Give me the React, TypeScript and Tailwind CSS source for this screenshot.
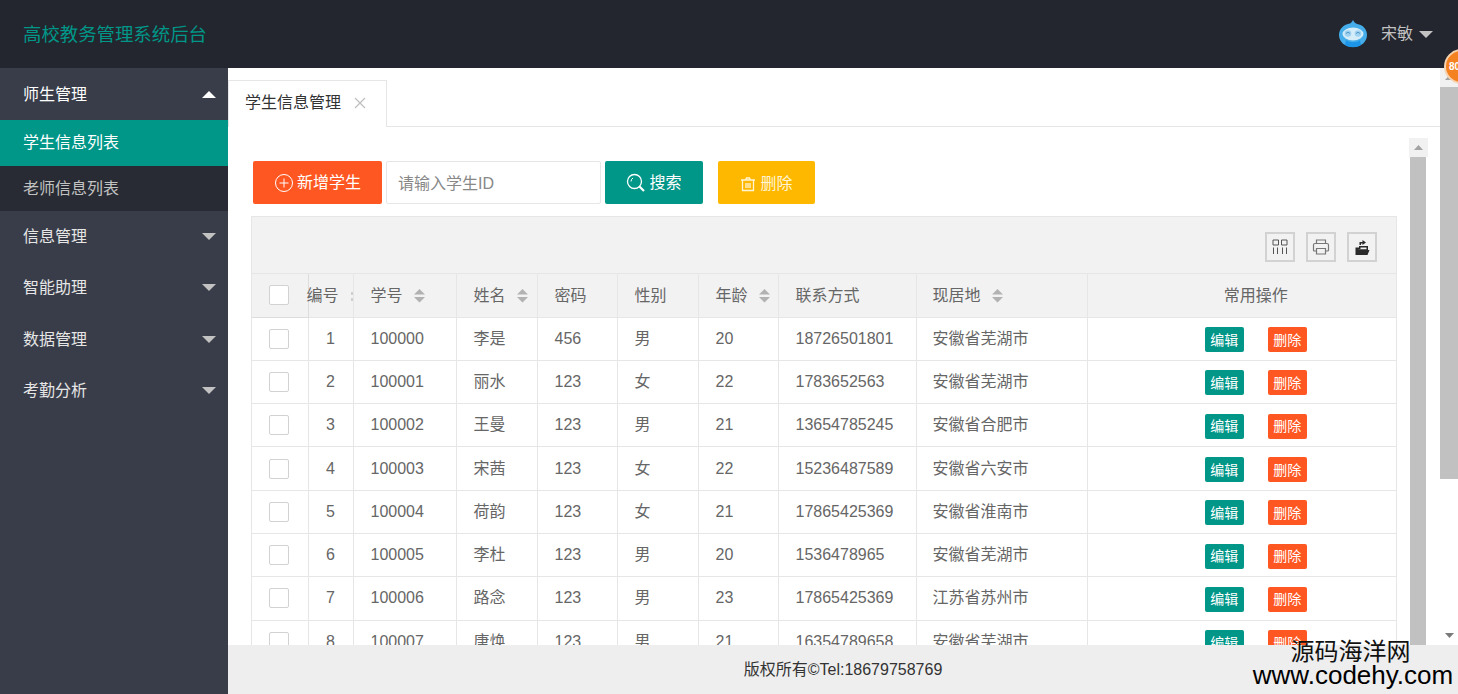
import React from "react";

const rows = [
  ["1", "100000", "李是", "456", "男", "20", "18726501801", "安徽省芜湖市"],
  ["2", "100001", "丽水", "123", "女", "22", "1783652563", "安徽省芜湖市"],
  ["3", "100002", "王曼", "123", "男", "21", "13654785245", "安徽省合肥市"],
  ["4", "100003", "宋茜", "123", "女", "22", "15236487589", "安徽省六安市"],
  ["5", "100004", "荷韵", "123", "女", "21", "17865425369", "安徽省淮南市"],
  ["6", "100005", "李杜", "123", "男", "20", "1536478965", "安徽省芜湖市"],
  ["7", "100006", "路念", "123", "男", "23", "17865425369", "江苏省苏州市"],
  ["8", "100007", "唐焕", "123", "男", "21", "16354789658", "安徽省芜湖市"],
];

function Caret({ up, color = "#c2c2c2" }: { up?: boolean; color?: string }) {
  return (
    <svg width="14" height="7" viewBox="0 0 14 7" className="shrink-0">
      <path d={up ? "M7 0L14 7H0Z" : "M0 0H14L7 7Z"} fill={color} />
    </svg>
  );
}

function Sort() {
  return (
    <svg width="11" height="14" viewBox="0 0 11 14" className="ml-[11px] inline-block align-[-2px]">
      <path d="M5.500 0L11 5.500H0Z M0 8H11L5.500 13.500Z" fill="#b2b2b2" />
    </svg>
  );
}

function Check() {
  return <div className="mx-auto h-5 w-5 -translate-x-px rounded-[2px] border border-[#d2d2d2] bg-white" />;
}

function NavGroup({ label, h, up }: { label: string; h: string; up?: boolean }) {
  return (
    <div className={`flex items-center justify-between pl-[23px] pr-[12px] text-base ${h} ${up ? "text-white" : "text-[#e6e6e6]"}`}>
      <span className="mt-[2px]">{label}</span>
      <Caret up={up} color={up ? "#ffffff" : "#c2c2c2"} />
    </div>
  );
}

function ToolIcon({ children }: { children: React.ReactNode }) {
  return (
    <div className="flex h-[30px] w-[30px] items-center justify-center border-2 border-[#d2d2d2]">
      {children}
    </div>
  );
}

function Owl() {
  return (
    <svg width="30" height="28" viewBox="0 0 30 28">
      <path d="M15 0C16 2 17 3 19 4C25 5 29 9 29 15C29 22 23 27 15 27C7 27 1 22 1 15C1 9 6 4 12 3.500C13 3 14 2 15 0Z" fill="#45ade9" />
      <path d="M8 20C11 23 19 23 22 20L23 25C19 28 11 28 7 25Z" fill="#1c95e8" />
      <ellipse cx="15" cy="14" rx="10.500" ry="6.500" fill="#d5ecf9" />
      <circle cx="10" cy="13.500" r="3.300" fill="#9fd2f0" />
      <circle cx="20" cy="13.500" r="3.300" fill="#9fd2f0" />
      <path d="M8 13.500Q10 11 12 13.500M18 13.500Q20 11 22 13.500" stroke="#3f87b8" strokeWidth="0.800" fill="none" />
    </svg>
  );
}

export default function App() {
  return (
    <div className="relative flex h-[694px] w-[1458px] flex-col overflow-hidden bg-white font-[Liberation_Sans,Noto_Sans_CJK_SC,sans-serif]">
      <header className="flex h-[68px] shrink-0 items-center justify-between bg-[#23262e] pl-[23px] pr-[25px]">
        <span className="mt-[2px] text-[18.4px] text-[#009688]">高校教务管理系统后台</span>
        <div className="flex items-center text-base text-[#c2c2c2]">
          <Owl />
          <span className="-mt-[1px] ml-[13px]">宋敏</span>
          <span className="ml-[6px]"><Caret color="#c2c2c2" /></span>
        </div>
      </header>

      <div className="flex min-h-0 flex-1">
        <aside className="w-[228px] shrink-0 bg-[#393d49]">
          <NavGroup label="师生管理" h="h-[52px]" up />
          <div className="flex h-[46px] items-center bg-[#009688] pl-[23px] text-base text-white">学生信息列表</div>
          <div className="flex h-[45px] items-center bg-[#282b33] pl-[23px] text-base text-[#c2c2c2]">老师信息列表</div>
          <NavGroup label="信息管理" h="h-[50px]" />
          <NavGroup label="智能助理" h="h-[52px]" />
          <NavGroup label="数据管理" h="h-[52px]" />
          <NavGroup label="考勤分析" h="h-[50px]" />
        </aside>

        <div className="flex min-w-0 flex-1 flex-col">
          <main className="flex min-h-0 flex-1">
            <div className="flex min-w-0 flex-1 flex-col">
              <div className="mt-3 flex h-[47px] shrink-0 border-b border-[#e6e6e6]">
                <div className="-mb-px flex w-[159px] items-center border border-b-0 border-[#e6e6e6] bg-white pb-[2px] pl-[16px] text-base text-[#333]">
                  学生信息管理
                  <svg width="12" height="12" viewBox="0 0 12 12" className="ml-[13px]">
                    <path d="M1 1L11 11M11 1L1 11" stroke="#bdbdbd" strokeWidth="1.200" />
                  </svg>
                </div>
              </div>

              <div className="ml-[23px] mt-[11px] flex min-h-0 flex-1 gap-[12px]">
                <div className="w-[1146px] shrink-0 overflow-hidden pt-[23px]">
                  <div className="ml-[2px] flex h-[43px] items-stretch">
                    <button className="flex w-[129px] items-center justify-center rounded-[2px] bg-[#ff5722] text-base text-white">
                      <svg width="20" height="20" viewBox="0 0 20 20" className="mr-[3px]" fill="none" stroke="#fff" strokeWidth="1">
                        <circle cx="10" cy="10" r="8.500" />
                        <path d="M10 5.500V14.500M5.500 10H14.500" />
                      </svg>
                      新增学生
                    </button>
                    <div className="ml-[4px] flex w-[215px] items-center rounded-[2px] border border-[#e6e6e6] bg-white pl-[11px] pt-[2px] text-base text-[#888]">
                      请输入学生ID
                    </div>
                    <button className="ml-[4px] flex w-[98px] items-center justify-center rounded-[2px] bg-[#009688] text-base text-white">
                      <svg width="20" height="20" viewBox="0 0 20 20" className="mr-[3px]" fill="none" stroke="#fff">
                        <circle cx="8.500" cy="8.500" r="7" strokeWidth="1.300" />
                        <path d="M13.500 13.500L18 18" strokeWidth="2.200" />
                        <path d="M5 8.500Q5 6 7 5" strokeWidth="1" />
                      </svg>
                      搜索
                    </button>
                    <button className="ml-[15px] flex w-[97px] items-center justify-center rounded-[2px] bg-[#ffb800] pt-[2px] text-base text-[#fff5d6]">
                      <svg width="16" height="16" viewBox="0 0 16 16" className="mr-[4px]" fill="none" stroke="#fff5d6" strokeWidth="1.300">
                        <path d="M1 4H15M5.500 4L6.500 2H9.500L10.500 4M2.500 4V14.500H13.500V4M6 7V12M8 7V12M10 7V12" />
                      </svg>
                      删除
                    </button>
                  </div>

                  <div className="mt-3 border-x border-t border-[#e6e6e6]">
                    <div className="flex h-[57px] items-center justify-end gap-[11px] border-b border-[#e6e6e6] bg-[#f2f2f2] pr-[19px] pt-[4px]">
                      <ToolIcon>
                        <svg width="16" height="16" viewBox="0 0 16 16" fill="none" stroke="#555" strokeWidth="1">
                          <path d="M1 1H6.500V6H1ZM9.500 1H15V6H9.500ZM1.500 8.500V15M5.500 8.500V15M10.500 8.500V15M14.500 8.500V15" />
                        </svg>
                      </ToolIcon>
                      <ToolIcon>
                        <svg width="18" height="18" viewBox="0 0 18 18" fill="none" stroke="#777" strokeWidth="1.200">
                          <path d="M4.500 5V2H13.500V5M4.500 13H2.500Q1.500 13 1.500 12V7Q1.500 5.500 3 5.500H15Q16.500 5.500 16.500 7V12Q16.500 13 15.500 13H13.500M4.500 10.500H13.500V16H4.500Z" />
                        </svg>
                      </ToolIcon>
                      <ToolIcon>
                        <svg width="16" height="18" viewBox="0 0 16 18" fill="#2b2b2b">
                          <path d="M1.500 17V9.500H5V8H14V12H15.500L13.500 17Z" />
                          <path d="M3 11.200H12.500V9.500H6.500V11Z" fill="#f2f2f2" />
                          <path d="M5.500 7V4H8.500V2L12 4.500L8.500 7V5.500H7V7Z" />
                        </svg>
                      </ToolIcon>
                    </div>

                    <table className="w-[1144px] table-fixed border-collapse text-base text-[#666]">
                      <colgroup>
                        <col className="w-[56px]" />
                        <col className="w-[45px]" />
                        <col className="w-[103px]" />
                        <col className="w-[81px]" />
                        <col className="w-[80px]" />
                        <col className="w-[81px]" />
                        <col className="w-[80px]" />
                        <col className="w-[138px]" />
                        <col className="w-[171px]" />
                        <col />
                      </colgroup>
                      <thead>
                        <tr className="h-[43px] bg-[#f2f2f2]">
                          <th className="border-r border-b border-[#dcdcdc] font-normal"><Check /></th>
                          <th className="whitespace-nowrap border-r border-b border-[#e6e6e6] pt-[2px] text-left font-normal">
                            <span className="-ml-[2px]">编号</span>
                            <svg width="2" height="9" viewBox="0 0 2 9" className="ml-[12px] inline-block align-[0px]">
                              <path d="M0 0H2V3H0ZM0 6H2V9H0Z" fill="#cfcfcf" />
                            </svg>
                          </th>
                          <th className="border-r border-b border-[#e6e6e6] pl-[17px] pt-[2px] text-left font-normal">学号<Sort /></th>
                          <th className="border-r border-b border-[#e6e6e6] pl-[17px] pt-[2px] text-left font-normal">姓名<Sort /></th>
                          <th className="border-r border-b border-[#e6e6e6] pl-[17px] pt-[2px] text-left font-normal">密码</th>
                          <th className="border-r border-b border-[#e6e6e6] pl-[17px] pt-[2px] text-left font-normal">性别</th>
                          <th className="border-r border-b border-[#e6e6e6] pl-[17px] pt-[2px] text-left font-normal">年龄<Sort /></th>
                          <th className="border-r border-b border-[#e6e6e6] pl-[17px] pt-[2px] text-left font-normal">联系方式</th>
                          <th className="border-r border-b border-[#e6e6e6] pl-[16px] pt-[2px] text-left font-normal">现居地<Sort /></th>
                          <th className="border-b border-[#e6e6e6] pl-[28px] pt-[2px] text-center font-normal">常用操作</th>
                        </tr>
                      </thead>
                      <tbody>
                        {rows.map((r) => (
                          <tr key={r[0]} className="h-[43.3px]">
                            <td className="border-r border-b border-[#e6e6e6]"><Check /></td>
                            <td className="border-r border-b border-[#e6e6e6] text-center">{r[0]}</td>
                            {r.slice(1).map((c, i) => (
                              <td key={i} className={`border-r border-b border-[#e6e6e6] ${i === 6 ? "pl-[16px]" : "pl-[17px]"}`}>{c}</td>
                            ))}
                            <td className="border-b border-[#e6e6e6] pl-[28px] pt-[2px]">
                              <div className="flex justify-center gap-6 text-sm text-white">
                                <span className="flex h-[25px] w-[39px] items-center justify-center rounded-[2px] bg-[#009688]">编辑</span>
                                <span className="flex h-[25px] w-[39px] items-center justify-center rounded-[2px] bg-[#ff5722]">删除</span>
                              </div>
                            </td>
                          </tr>
                        ))}
                      </tbody>
                    </table>
                  </div>
                </div>

                <div className="flex w-[19px] shrink-0 flex-col">
                  <div className="flex h-[19px] shrink-0 items-center justify-center bg-[#f1f1f1]">
                    <svg width="9" height="5" viewBox="0 0 9 5"><path d="M4.500 0L9 5H0Z" fill="#a3a3a3" /></svg>
                  </div>
                  <div className="ml-px mr-[2px] flex-1 bg-[#c1c1c1]" />
                </div>
                <div className="w-[12px] shrink-0" />
              </div>
            </div>

            <div className="flex w-[18px] shrink-0 flex-col bg-white">
              <div className="flex h-[19px] shrink-0 items-center justify-center bg-[#f1f1f1]">
                <svg width="9" height="5" viewBox="0 0 9 5"><path d="M4.500 0L9 5H0Z" fill="#a3a3a3" /></svg>
              </div>
              <div className="h-[392px] bg-[#c1c1c1]" />
              <div className="flex flex-1 items-end justify-center pb-[7px]">
                <svg width="9" height="5" viewBox="0 0 9 5"><path d="M0 0H9L4.500 5Z" fill="#7a7a7a" /></svg>
              </div>
            </div>
          </main>

          <footer className="flex h-[49px] shrink-0 items-center justify-center bg-[#eeeeee] text-base text-[#333]">
            版权所有©Tel:18679758769
          </footer>
        </div>
      </div>

      <div className="absolute left-[1444px] top-[49px] flex h-[35px] w-[35px] items-center rounded-full border-2 border-[#f6d3b0] bg-[#f58220] pl-[3px] text-[10px] font-bold text-white">
        80
      </div>
      <div className="absolute right-[5px] top-[637px] flex w-[200px] flex-col items-center text-black">
        <span className="pr-[5px] text-[24px] leading-[30px] text-[#111]">源码海洋网</span>
        <span className="whitespace-nowrap text-[26px] leading-[16px]">www.codehy.com</span>
      </div>
    </div>
  );
}
